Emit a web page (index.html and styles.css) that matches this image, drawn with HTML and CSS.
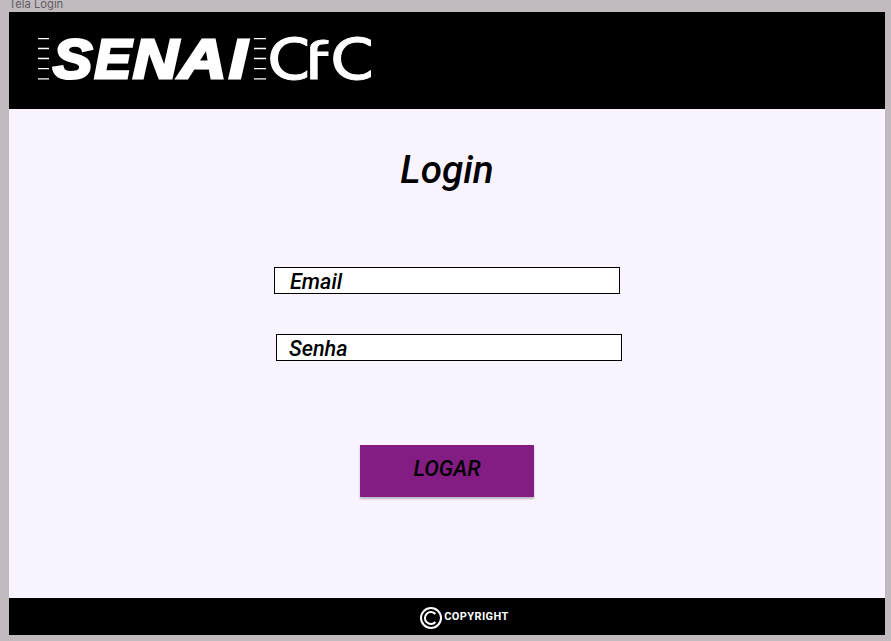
FILE: index.html
```html
<!DOCTYPE html>
<html lang="pt-BR">
<head>
<meta charset="utf-8">
<title>Tela Login</title>
<link rel="stylesheet" href="styles.css">
</head>
<body>
<div class="frame-label">Tela Login</div>
<div class="frame">
  <header class="header">
    <svg class="logo" width="340" height="60" viewBox="34 28 340 60" role="img" aria-label="SENAI CFC">
      <defs>
        <clipPath id="clip-c1"><path d="M268 30H307.3V85H268z"/></clipPath>
        <clipPath id="clip-f"><path d="M310.2 30H331V85H310.2z"/></clipPath>
        <clipPath id="clip-c2"><path d="M332 30H371V85H332z"/></clipPath>
      </defs>
      <path class="rules" d="M38 38.7h11M38 48.5h11M38 58.5h11M38 68.7h11M38 78.8h11M254 38.7h12M254 48.5h12M254 58.5h12M254 68.7h12M254 78.8h12"/>
      <text class="senai" transform="translate(53 78) scale(1.07 1)">S</text>
      <text class="senai" transform="translate(94.5 78) scale(1 1)">E</text>
      <text class="senai" transform="translate(133 78) scale(1.14 1)">N</text>
      <text class="senai" transform="translate(178.8 78) scale(1.2 1)">A</text>
      <text class="senai" transform="translate(229 78) scale(1.18 1)">I</text>
      <g clip-path="url(#clip-c1)"><text class="cfc" transform="translate(267.4 79.5) scale(1.17 1.02)">C</text></g>
      <g clip-path="url(#clip-f)"><text class="cfc" transform="translate(302.5 79) scale(1.3 .93)">f</text></g>
      <g clip-path="url(#clip-c2)"><text class="cfc" transform="translate(330.4 79.5) scale(1.17 1.02)">C</text></g>
    </svg>
  </header>
  <main class="main">
    <h1 class="title">Login</h1>
    <form class="form">
      <div class="field">Email</div>
      <div class="field field-password">Senha</div>
      <button class="submit" type="button">LOGAR</button>
    </form>
  </main>
  <footer class="footer">
    <svg class="copy-icon" width="24" height="24" viewBox="0 0 24 24"><circle cx="12" cy="12" r="10"/><path d="M16.4 8a6 6 0 1 0 0 8"/></svg>
    <span>COPYRIGHT</span>
  </footer>
</div>
</body>
</html>
```
FILE: styles.css
```css
* { box-sizing: border-box; }
body {
  margin: 0;
  height: 641px;
  padding: 0 6px 0 9px;
  background: #c1babe;
  font-family: Roboto, sans-serif;
  color: #000;
  overflow: hidden;
}
.frame-label {
  height: 12px;
  font: 11.2px/9px Inter, sans-serif;
  color: #625d60;
}
.frame {
  display: flex;
  flex-direction: column;
  height: 622.5px;
  background: #f9f4ff;
}
.header {
  height: 96.5px;
  padding: 16px 25px;
  background: #000;
}
.logo { display: block; overflow: visible; }
.rules { stroke: #fff; stroke-width: 1.3; }
.senai {
  font: italic bold 55px "Liberation Sans", sans-serif;
  fill: #fff;
  stroke: #fff;
  stroke-width: 3;
}
.cfc {
  font: 58px Lato, sans-serif;
  fill: #fff;
  stroke: #fff;
  stroke-width: .9;
}
.main {
  flex: 1;
  display: flex;
  flex-direction: column;
  align-items: center;
}
.title {
  margin: 38px 0 0;
  font-size: 38.7px;
  line-height: 46px;
  font-style: italic;
  font-weight: 500;
}
.form {
  display: flex;
  flex-direction: column;
  align-items: center;
  margin-top: 74px;
}
.field {
  width: 346px;
  height: 27px;
  padding-left: 15px;
  border: 1.5px solid #000;
  background: #fff;
  font-size: 21.6px;
  line-height: 28px;
  font-style: italic;
  font-weight: 500;
}
.field-password {
  margin: 40px 0 0 4px;
  padding-left: 12px;
}
.submit {
  width: 174px;
  height: 52px;
  margin-top: 84.5px;
  padding: 0 0 5px;
  border: 0;
  background: #831d83;
  box-shadow: 0 2px 2px rgba(0, 0, 0, .25);
  color: #000;
  font: italic 500 21.8px Roboto, sans-serif;
}
.footer {
  display: flex;
  align-items: center;
  justify-content: center;
  height: 36.5px;
  padding: 3px 0 0 34px;
  background: #000;
  color: #fff;
  font-size: 11px;
  font-weight: 700;
  letter-spacing: .4px;
}
.footer span { margin: -2px 0 0 1px; }
.copy-icon { fill: none; stroke: #fff; stroke-width: 2; }
```
